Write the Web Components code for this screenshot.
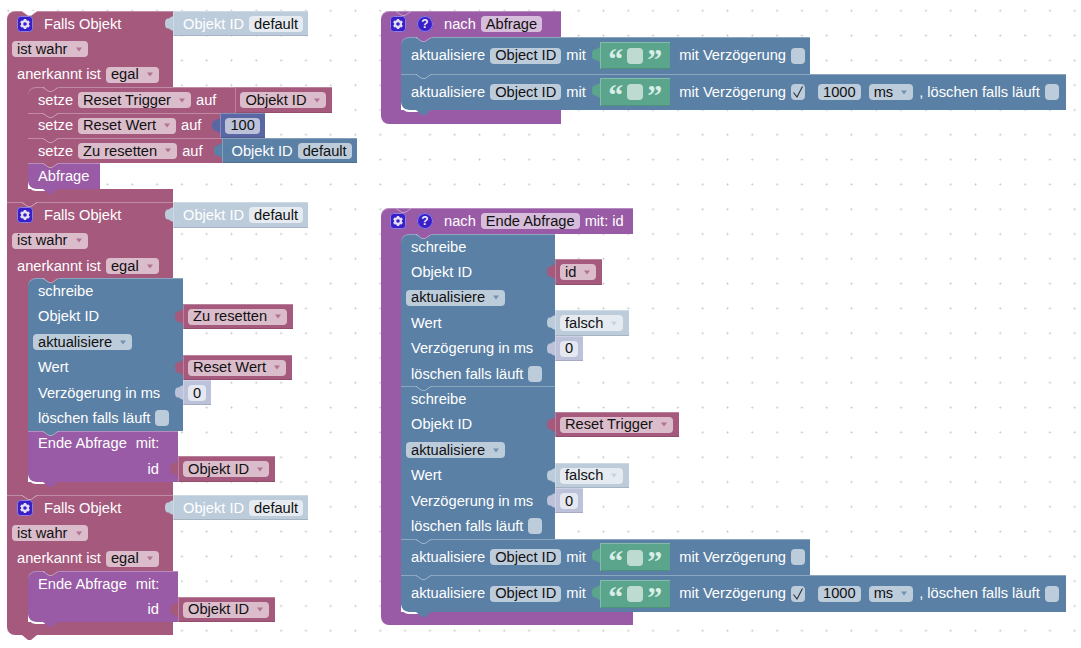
<!DOCTYPE html>
<html lang="de">
<head>
<meta charset="utf-8">
<title>Blockly</title>
<style>
  html, body { margin: 0; height: 100%; background: #fff; }
  .crimson { --c: #a5597d; }
  .blue { --c: #5b80a5; }
  .purple { --c: #995ba5; }
  .green { --c: #5ba58c; }
  .indigo { --c: #5b67a5; }
  .ghost { --c: #bdccdb; --vpl: 10px; }
  .ghost-num { --c: #bdc2db; }
  .hat { --w: 166px; --g: 21px; }
  .round-top { --tl: 8px; }
  .round-foot { --fr: 8px; }
  .tall { --h: 36.5px; }
  .tight { --pl: 5px; }
  .gap { --pr: 19px; }
  .labelled { --vpl: 10px; }
  .icons { --pl: 9px; --h: 26px; }
  .short { --pr: 5px; }
  .inset { height: 27px; margin: 0 4px 0 9.5px; --vpl: 8px; --vpr: 8px; --vgap: 4px; align-self: center; }
  .num { margin-left: 8px; }
  .unit { margin: 0 1px 0 3px; }
  .box { width: 16px; --fp: 0; }
</style>
</head>
<body>
<bk-canvas>
  <!-- linke Spalte, drei Trigger untereinander -->
  <bk-stack x="7" y="11">
    <bk-block class="crimson hat round-top" notch>
      <bk-row><bk-gear></bk-gear>Falls Objekt
        <bk-value slot="value" class="ghost">Objekt ID <bk-field>default</bk-field></bk-value></bk-row>
      <bk-row class="tight"><bk-field arrow>ist wahr</bk-field></bk-row>
      <bk-row>anerkannt ist <bk-field arrow>egal</bk-field></bk-row>
      <bk-mouth>
        <bk-block class="crimson">
          <bk-row class="gap">setze <bk-field arrow>Reset Trigger</bk-field> auf
            <bk-value slot="value" class="crimson"><bk-field arrow>Objekt ID</bk-field></bk-value></bk-row>
        </bk-block>
        <bk-block class="crimson">
          <bk-row class="gap">setze <bk-field arrow>Reset Wert</bk-field> auf
            <bk-value slot="value" class="indigo"><bk-field>100</bk-field></bk-value></bk-row>
        </bk-block>
        <bk-block class="crimson">
          <bk-row class="gap">setze <bk-field arrow>Zu resetten</bk-field> auf
            <bk-value slot="value" class="blue labelled">Objekt ID <bk-field>default</bk-field></bk-value></bk-row>
        </bk-block>
        <bk-block class="purple" style="--w:72px">
          <bk-row>Abfrage</bk-row>
        </bk-block>
      </bk-mouth>
    </bk-block>

    <bk-block class="crimson hat" notch>
      <bk-row><bk-gear></bk-gear>Falls Objekt
        <bk-value slot="value" class="ghost">Objekt ID <bk-field>default</bk-field></bk-value></bk-row>
      <bk-row class="tight"><bk-field arrow>ist wahr</bk-field></bk-row>
      <bk-row>anerkannt ist <bk-field arrow>egal</bk-field></bk-row>
      <bk-mouth>
        <bk-block class="blue" style="--w:155px">
          <bk-row>schreibe</bk-row>
          <bk-row>Objekt ID
            <bk-value slot="value" class="crimson"><bk-field arrow>Zu resetten</bk-field></bk-value></bk-row>
          <bk-row class="tight"><bk-field arrow>aktualisiere</bk-field></bk-row>
          <bk-row>Wert
            <bk-value slot="value" class="crimson"><bk-field arrow>Reset Wert</bk-field></bk-value></bk-row>
          <bk-row>Verzögerung in ms
            <bk-value slot="value" class="ghost-num"><bk-field>0</bk-field></bk-value></bk-row>
          <bk-row>löschen falls läuft <bk-check></bk-check></bk-row>
        </bk-block>
        <bk-block class="purple" style="--w:150px">
          <bk-row><span style="margin-right:4px">Ende Abfrage</span> mit:</bk-row>
          <bk-row end>id
            <bk-value slot="value" class="crimson"><bk-field arrow>Objekt ID</bk-field></bk-value></bk-row>
        </bk-block>
      </bk-mouth>
    </bk-block>

    <bk-block class="crimson hat round-foot" notch>
      <bk-row><bk-gear></bk-gear>Falls Objekt
        <bk-value slot="value" class="ghost">Objekt ID <bk-field>default</bk-field></bk-value></bk-row>
      <bk-row class="tight"><bk-field arrow>ist wahr</bk-field></bk-row>
      <bk-row>anerkannt ist <bk-field arrow>egal</bk-field></bk-row>
      <bk-mouth>
        <bk-block class="purple" style="--w:150px">
          <bk-row><span style="margin-right:4px">Ende Abfrage</span> mit:</bk-row>
          <bk-row end>id
            <bk-value slot="value" class="crimson"><bk-field arrow>Objekt ID</bk-field></bk-value></bk-row>
        </bk-block>
      </bk-mouth>
    </bk-block>
  </bk-stack>

  <!-- nach Abfrage -->
  <bk-stack x="381" y="11">
    <bk-block class="purple round-top round-foot" style="--w:180px;--g:20px" nobump>
      <bk-row class="icons"><bk-gear></bk-gear><bk-help></bk-help>nach <bk-field>Abfrage</bk-field></bk-row>
      <bk-mouth>
        <bk-block class="blue tall">
          <bk-row class="short">aktualisiere <bk-field>Object ID</bk-field> mit
            <bk-value class="green inset"><bk-quote>“</bk-quote><bk-field class="box"></bk-field><bk-quote>”</bk-quote></bk-value>
            mit Verzögerung <bk-check></bk-check></bk-row>
        </bk-block>
        <bk-block class="blue tall">
          <bk-row>aktualisiere <bk-field>Object ID</bk-field> mit
            <bk-value class="green inset"><bk-quote>“</bk-quote><bk-field class="box"></bk-field><bk-quote>”</bk-quote></bk-value>
            mit Verzögerung <bk-check checked></bk-check>
            <bk-field class="num">1000</bk-field><bk-field arrow class="unit">ms</bk-field>, löschen falls läuft <bk-check></bk-check></bk-row>
        </bk-block>
      </bk-mouth>
    </bk-block>
  </bk-stack>

  <!-- nach Ende Abfrage -->
  <bk-stack x="381" y="208">
    <bk-block class="purple round-top round-foot" style="--w:252px;--g:20px" nobump>
      <bk-row class="icons"><bk-gear></bk-gear><bk-help></bk-help>nach <bk-field>Ende Abfrage</bk-field> mit: id</bk-row>
      <bk-mouth>
        <bk-block class="blue" style="--w:154px">
          <bk-row>schreibe</bk-row>
          <bk-row>Objekt ID
            <bk-value slot="value" class="crimson"><bk-field arrow>id</bk-field></bk-value></bk-row>
          <bk-row class="tight"><bk-field arrow>aktualisiere</bk-field></bk-row>
          <bk-row>Wert
            <bk-value slot="value" class="ghost" style="--vpl:5px"><bk-field arrow>falsch</bk-field></bk-value></bk-row>
          <bk-row>Verzögerung in ms
            <bk-value slot="value" class="ghost-num"><bk-field>0</bk-field></bk-value></bk-row>
          <bk-row>löschen falls läuft <bk-check></bk-check></bk-row>
        </bk-block>
        <bk-block class="blue" style="--w:154px">
          <bk-row>schreibe</bk-row>
          <bk-row>Objekt ID
            <bk-value slot="value" class="crimson"><bk-field arrow>Reset Trigger</bk-field></bk-value></bk-row>
          <bk-row class="tight"><bk-field arrow>aktualisiere</bk-field></bk-row>
          <bk-row>Wert
            <bk-value slot="value" class="ghost" style="--vpl:5px"><bk-field arrow>falsch</bk-field></bk-value></bk-row>
          <bk-row>Verzögerung in ms
            <bk-value slot="value" class="ghost-num"><bk-field>0</bk-field></bk-value></bk-row>
          <bk-row>löschen falls läuft <bk-check></bk-check></bk-row>
        </bk-block>
        <bk-block class="blue tall">
          <bk-row class="short">aktualisiere <bk-field>Object ID</bk-field> mit
            <bk-value class="green inset"><bk-quote>“</bk-quote><bk-field class="box"></bk-field><bk-quote>”</bk-quote></bk-value>
            mit Verzögerung <bk-check></bk-check></bk-row>
        </bk-block>
        <bk-block class="blue tall">
          <bk-row>aktualisiere <bk-field>Object ID</bk-field> mit
            <bk-value class="green inset"><bk-quote>“</bk-quote><bk-field class="box"></bk-field><bk-quote>”</bk-quote></bk-value>
            mit Verzögerung <bk-check checked></bk-check>
            <bk-field class="num">1000</bk-field><bk-field arrow class="unit">ms</bk-field>, löschen falls läuft <bk-check></bk-check></bk-row>
        </bk-block>
      </bk-mouth>
    </bk-block>
  </bk-stack>
</bk-canvas>

<script>
class BkElement extends HTMLElement {
  constructor() {
    super();
    this.attachShadow({ mode: 'open' });
  }

  getMarkup() {
    return '<slot></slot>';
  }

  getStyles() {
    return '';
  }

  connectedCallback() {
    if (this.shadowRoot.firstChild) return;
    const template = document.createElement('template');
    template.innerHTML = `<style>${this.getStyles()}</style>${this.getMarkup()}`;
    this.shadowRoot.appendChild(template.content.cloneNode(true));
  }
}

class BkCanvas extends BkElement {
  getMarkup() {
    return `
      <svg class="grid" width="100%" height="100%">
        <defs>
          <pattern id="dots" x="6.8" y="9.3" width="24.8" height="24.8" patternUnits="userSpaceOnUse">
            <path d="M0 1.5H3M1.5 0V3" stroke="#e2e2e2" stroke-width="1"/>
            <path d="M1 1h1v1H1z" fill="#c8c8c8"/>
          </pattern>
        </defs>
        <rect width="100%" height="100%" fill="url(#dots)"/>
      </svg>
      <slot></slot>
    `;
  }

  getStyles() {
    return `
      :host {
        display: block;
        position: relative;
        width: 1081px;
        height: 648px;
        overflow: hidden;
        background: #fff;
        color: #fff;
        font: 14.67px/1 "Liberation Sans", Arial, sans-serif;
      }
      .grid { position: absolute; inset: 0; }
    `;
  }
}

// freie Position auf der Arbeitsflaeche
class BkStack extends BkElement {
  getStyles() {
    return `
      :host {
        display: block;
        position: absolute;
        left: ${this.getAttribute('x')}px;
        top: ${this.getAttribute('y')}px;
        width: max-content;
      }
    `;
  }
}

class BkBlock extends BkElement {
  getMarkup() {
    return `
      <slot></slot>
      <svg class="vee" width="16" height="6" viewBox="0 0 16 6"><path d="M0 .5 6 4.5H9L15 .5" fill="none" stroke="rgba(255,255,255,.4)"/></svg>
      <svg class="cut" width="16" height="6" viewBox="0 0 16 6"><path d="M0 0 6 4.5H9L15 0Z" fill="#fff"/></svg>
      <svg class="bump" width="16" height="6" viewBox="0 0 16 6"><path d="M0 0 6 5H9L15 0Z"/></svg>
    `;
  }

  getStyles() {
    return `
      :host {
        display: block;
        position: relative;
        --w: auto;
        --tl: 0px;
        --bl: 0px;
        --fr: 0px;
        --g: 20px;
      }
      svg { position: absolute; left: 15px; }
      .vee { top: 0; z-index: 4; }
      .cut { top: 0; z-index: 1; display: none; }
      :host([notch]) .cut { display: block; }
      .bump { top: 100%; z-index: 3; fill: var(--c); }
      :host([nobump]) .bump { display: none; }
    `;
  }
}

class BkRow extends BkElement {
  getMarkup() {
    return `<div class="body"><slot></slot></div><slot name="value"></slot>`;
  }

  getStyles() {
    return `
      :host {
        display: flex;
        height: var(--h, 25.4px);
      }
      .body {
        display: flex;
        align-items: center;
        gap: 5px;
        box-sizing: border-box;
        width: var(--w);
        padding: .6px var(--pr, 7px) 0 var(--pl, 10px);
        background: var(--c);
        white-space: nowrap;
      }
      :host([end]) .body { justify-content: flex-end; padding-right: 19px; }
      :host(:first-child) .body {
        border-top-left-radius: var(--tl);
        box-shadow: inset 0 1px rgba(255, 255, 255, .3);
      }
      :host(:last-child) .body { border-bottom-left-radius: var(--bl); }
    `;
  }
}

// C-Klammer mit den inneren Bloecken und dem Fuss
class BkMouth extends BkElement {
  getMarkup() {
    return `
      <div class="mouth">
        <div class="gutter"></div>
        <div class="stmts">
          <svg class="bump" width="16" height="6" viewBox="0 0 16 6"><path d="M0 0 6 5H9L15 0Z"/></svg>
          <slot></slot>
        </div>
      </div>
      <div class="foot"></div>
    `;
  }

  getStyles() {
    return `
      :host { display: block; }
      .mouth { display: grid; grid-template-columns: var(--g) max-content; }
      .gutter { background: var(--c); }
      .stmts {
        position: relative;
        background: linear-gradient(var(--c), var(--c)) top left / 10px 10px no-repeat;
      }
      .stmts::after {
        content: "";
        position: absolute;
        left: 0;
        bottom: -2px;
        width: 26px;
        height: 8px;
        box-sizing: border-box;
        border-bottom: 2px solid #fff;
        border-bottom-left-radius: 8px;
        z-index: 1;
      }
      .bump { position: absolute; left: 16px; top: 0; z-index: 3; fill: var(--c); }
      ::slotted(bk-block:first-child) { --tl: 8px; }
      ::slotted(bk-block:last-child) { --bl: 8px; }
      .foot {
        width: var(--w);
        height: 13.5px;
        background: var(--c);
        border-bottom-left-radius: var(--fr);
      }
    `;
  }
}

class BkValue extends BkElement {
  getMarkup() {
    return `
      <svg class="tab" width="8" height="15" viewBox="0 0 8 15"><path d="M8 .5C5 .5 5 2.5 3 2.5 .8 2.5 0 4.5 0 7.5S.8 12.5 3 12.5C5 12.5 5 14.5 8 14.5Z"/></svg>
      <slot></slot>
    `;
  }

  getStyles() {
    return `
      :host {
        display: flex;
        flex: none;
        position: relative;
        align-items: center;
        gap: var(--vgap, 5px);
        padding: .6px var(--vpr, 5px) 0 var(--vpl, 5px);
        background: var(--c);
        box-shadow: inset 1px 1px rgba(255, 255, 255, .25), inset 0 -1px rgba(0, 0, 0, .12);
        white-space: nowrap;
      }
      ::slotted(bk-field[arrow]) { margin-right: 1px; }
      .tab { position: absolute; left: -8px; top: 5px; fill: var(--c); }
    `;
  }
}

class BkField extends BkElement {
  getMarkup() {
    const arrow = this.hasAttribute('arrow')
      ? '<svg class="arrow" width="6" height="5" viewBox="0 0 6 5"><path d="M0 .5H6L3 4.5Z"/></svg>'
      : '';
    return `<slot></slot>${arrow}`;
  }

  getStyles() {
    return `
      :host {
        display: inline-flex;
        flex: none;
        align-items: center;
        box-sizing: border-box;
        height: 16px;
        padding: 0 var(--fp, 5px);
        border-radius: 4px;
        background: rgba(255, 255, 255, .6);
        color: #111;
      }
      .arrow { margin: 0 1px 0 8px; fill: var(--c); opacity: .75; }
    `;
  }
}

class BkCheck extends BkElement {
  getMarkup() {
    return this.hasAttribute('checked')
      ? '<svg width="14" height="16" viewBox="0 0 14 16"><path d="M2.5 8.5 6 13 11.5 2.5" fill="none" stroke="#26303a" stroke-width="1.1"/></svg>'
      : '';
  }

  getStyles() {
    return `
      :host {
        display: block;
        flex: none;
        width: 14px;
        height: 16px;
        border-radius: 4px;
        background: rgba(255, 255, 255, .6);
      }
      svg { display: block; }
    `;
  }
}

class BkGear extends BkElement {
  getMarkup() {
    return `
      <svg width="16" height="16" viewBox="0 0 16 16">
        <rect x=".5" y=".5" width="15" height="15" rx="3" fill="#3a1fc8" stroke="#8a7fe0"/>
        <path d="M8 3v2.2M8 10.8V13M3.7 5.5l1.9 1.1M10.4 9.4l1.9 1.1M3.7 10.5l1.9-1.1M10.4 6.6l1.9-1.1" stroke="#e4e0f4" stroke-width="2.4"/>
        <circle cx="8" cy="8" r="2.9" fill="none" stroke="#e4e0f4" stroke-width="2.2"/>
      </svg>
    `;
  }

  getStyles() {
    return `
      :host { display: block; flex: none; width: 16px; height: 16px; margin-right: 6px; }
      svg { display: block; }
    `;
  }
}

class BkHelp extends BkElement {
  getMarkup() {
    return `?`;
  }

  getStyles() {
    return `
      :host {
        display: flex;
        flex: none;
        align-items: center;
        justify-content: center;
        width: 16px;
        height: 16px;
        margin-right: 6px;
        border-radius: 50%;
        background: #3a1fc8;
        box-shadow: inset 0 0 0 1px #8a7fe0;
        color: #eee;
        font-size: 12px;
        font-weight: bold;
      }
    `;
  }
}

class BkQuote extends BkElement {
  getStyles() {
    return `
      :host {
        display: block;
        flex: none;
        width: 15px;
        height: 16px;
        overflow: visible;
        color: #d8eee6;
        font: bold 30px/21px "Liberation Serif", serif;
        text-align: center;
      }
    `;
  }
}

customElements.define('bk-canvas', BkCanvas);
customElements.define('bk-stack', BkStack);
customElements.define('bk-block', BkBlock);
customElements.define('bk-row', BkRow);
customElements.define('bk-mouth', BkMouth);
customElements.define('bk-value', BkValue);
customElements.define('bk-field', BkField);
customElements.define('bk-check', BkCheck);
customElements.define('bk-gear', BkGear);
customElements.define('bk-help', BkHelp);
customElements.define('bk-quote', BkQuote);
</script>
</body>
</html>
